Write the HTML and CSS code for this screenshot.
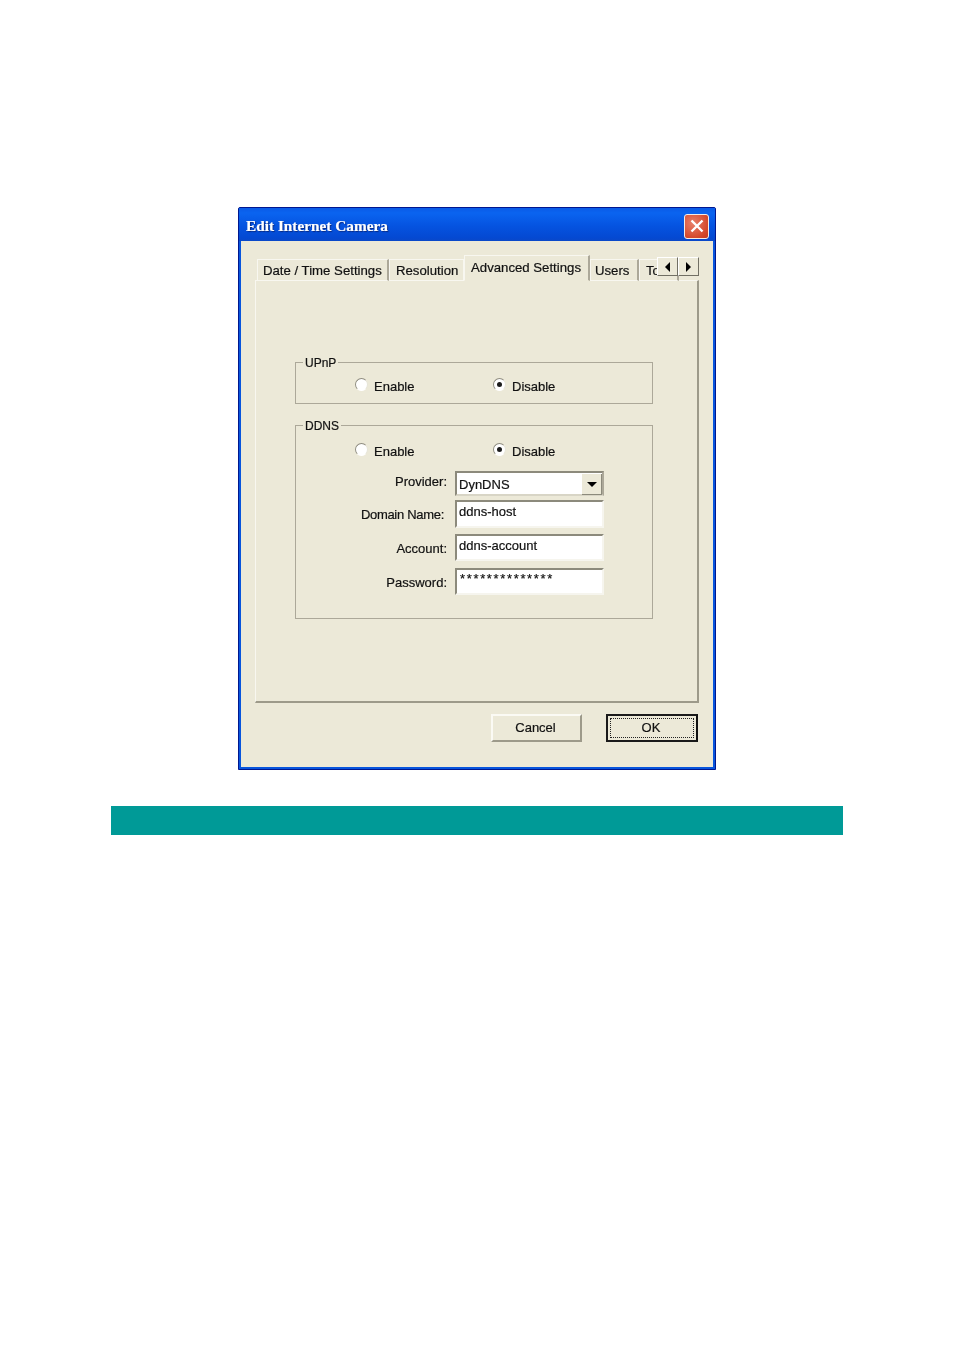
FILE: index.html
```html
<!DOCTYPE html>
<html lang="en">
<head>
  <meta charset="UTF-8" />
  <title>Edit Internet Camera</title>
  <link rel="stylesheet" href="styles.css">
</head>
<body>
  <main class="dialog">
    <header class="titlebar">
      <span class="title">Edit Internet Camera</span>
      <button class="close" aria-label="Close">
        <svg width="14" height="14" viewBox="0 0 14 14">
          <path d="M1.5 1.5 L12.5 12.5 M12.5 1.5 L1.5 12.5" stroke="#fff" stroke-width="2.4" fill="none" />
        </svg>
      </button>
    </header>

    <div class="dialog-body">
      <!-- Tabs -->
      <div class="tabs">
        <span class="tab tab-date">Date / Time Settings</span>
        <span class="tab tab-res">Resolution</span>
        <span class="tab tab-active">Advanced Settings</span>
        <span class="tab tab-users">Users</span>
        <span class="tab tab-tools">To</span>
        <div class="tab-arrows">
          <span class="arrow arrow-left"></span>
          <span class="arrow arrow-right"></span>
        </div>
      </div>

      <div class="panel">
        <!-- UPnP -->
        <fieldset class="group group-upnp">
          <legend>UPnP</legend>
          <div class="radio-row">
            <label class="radio-item"><span class="radio"></span>Enable</label>
            <label class="radio-item"><span class="radio checked"></span>Disable</label>
          </div>
        </fieldset>

        <!-- DDNS -->
        <fieldset class="group group-ddns">
          <legend>DDNS</legend>
          <div class="radio-row">
            <label class="radio-item"><span class="radio"></span>Enable</label>
            <label class="radio-item"><span class="radio checked"></span>Disable</label>
          </div>

          <div class="form-row row-provider">
            <span class="field-label">Provider:</span>
            <div class="field combo">
              <span>DynDNS</span>
              <span class="combo-btn"></span>
            </div>
          </div>
          <div class="form-row row-domain">
            <span class="field-label label-domain">Domain Name:</span>
            <div class="field">ddns-host</div>
          </div>
          <div class="form-row row-account">
            <span class="field-label">Account:</span>
            <div class="field">ddns-account</div>
          </div>
          <div class="form-row row-password">
            <span class="field-label">Password:</span>
            <div class="field field-password">**************</div>
          </div>
        </fieldset>
      </div>

      <div class="buttons">
        <button class="btn"><span class="btn-text">Cancel</span></button>
        <button class="btn btn-default"><span class="focus-ring"><span class="btn-text">OK</span></span></button>
      </div>
    </div>
  </main>

  <div class="teal-bar"></div>
</body>
</html>
```

FILE: styles.css
```css
/* Page */
body {
  margin: 0;
  padding-top: 207px;
  background: #fff;
  font-family: "Liberation Sans", Arial, sans-serif;
  font-size: 13px;
  color: #111;
  -webkit-text-stroke: 0.2px currentColor;
}

/* Window frame */
.dialog {
  box-sizing: border-box;
  width: 478px;
  height: 563px;
  margin-left: 238px;
  display: flex;
  flex-direction: column;
  border: 1px solid #00178f;
  border-radius: 2px 2px 0 0;
  background: #0855dd;
  filter: blur(0.3px);
}

.titlebar {
  height: 33px;
  flex: none;
  display: flex;
  align-items: center;
  justify-content: space-between;
  padding: 3px 6px 0 7px;
  box-sizing: border-box;
  background: linear-gradient(180deg, #0a5ae6 0%, #0a64f0 15%, #0553e0 55%, #0449d2 90%, #0a48c8 100%);
}

.title {
  font-family: "Liberation Serif", serif;
  font-weight: 700;
  font-size: 15.3px;
  color: #fff;
  text-shadow: 1px 1px 1px #0a2a80;
}

.close {
  box-sizing: border-box;
  width: 25px;
  height: 25px;
  padding: 0;
  display: flex;
  align-items: center;
  justify-content: center;
  border: 1px solid #f3ece8;
  border-radius: 3px;
  background: radial-gradient(circle at 35% 35%, #e8806a, #d4492c 70%, #c53a1c);
}

.dialog-body {
  flex: 1;
  display: flex;
  flex-direction: column;
  margin: 0 2px 2px;
  padding: 14px 14px 0;
  background: #ece9d8;
}

/* Tabs */
.tabs {
  position: relative;
  height: 26px;
  flex: none;
  display: flex;
  align-items: flex-end;
  margin-bottom: -1px;
  z-index: 1;
  overflow: hidden;
  font-size: 13.2px;
}

.tab {
  box-sizing: border-box;
  height: 22px;
  flex: none;
  padding: 3px 0 0 5px;
  background: #ece9d8;
  border-top: 1px solid #f8f7f0;
  border-left: 1px solid #f8f7f0;
  border-right: 2px solid #aca899;
  border-bottom: 1px solid #f8f7f0;
  white-space: nowrap;
}

.tab-date { width: 132px; margin-left: 2px; }
.tab-res { width: 75px; padding-left: 6px; border-right-color: #f8f7f0; border-right-width: 1px; }
.tab-active {
  width: 126px;
  height: 26px;
  padding: 4px 0 0 6px;
  border-bottom: 1px solid #ece9d8;
}
.tab-users { width: 49px; padding-left: 4px; }
.tab-tools { width: 40px; padding-left: 6px; overflow: hidden; }

.tab-arrows {
  position: absolute;
  right: 0;
  top: 2px;
  display: flex;
}

.arrow {
  box-sizing: border-box;
  width: 21px;
  height: 19px;
  display: flex;
  align-items: center;
  justify-content: center;
  background: #ece9d8;
  border-top: 1px solid #fff;
  border-left: 1px solid #fff;
  border-right: 1px solid #716f64;
  border-bottom: 1px solid #716f64;
}

.arrow::before {
  content: "";
  border-top: 5px solid transparent;
  border-bottom: 5px solid transparent;
}

.arrow-left::before { border-right: 5px solid #000; }
.arrow-right::before { border-left: 5px solid #000; }

/* Panel */
.panel {
  box-sizing: border-box;
  height: 423px;
  flex: none;
  padding: 73px 44px 0 39px;
  border-top: 1px solid #f8f7f0;
  border-left: 1px solid #f8f7f0;
  border-right: 2px solid #9d9a8a;
  border-bottom: 2px solid #9d9a8a;
}

/* Group boxes */
.group {
  box-sizing: border-box;
  margin: 0;
  padding: 0 0 0 59px;
  border: 1px solid #aca899;
}

.group legend {
  position: relative;
  top: 1px;
  margin-left: -52px;
  padding: 0 2px;
  line-height: 16px;
  font-size: 12px;
}

.group-upnp { height: 50px; margin-bottom: 13px; }
.group-ddns { height: 202px; }

.radio-row {
  display: flex;
  margin-top: 9px;
}

.group-ddns .radio-row { margin-top: 11px; }

.radio-item {
  width: 138px;
  display: flex;
  align-items: center;
  gap: 6px;
  line-height: 16px;
}

.radio {
  box-sizing: border-box;
  position: relative;
  top: -3px;
  width: 13px;
  height: 13px;
  border-radius: 50%;
  border: 1px solid;
  border-color: #8f8d80 #e6e4d8 #fff #8f8d80;
  background: #fff;
}

.radio.checked::after {
  content: "";
  position: absolute;
  left: 3px;
  top: 3px;
  width: 5px;
  height: 5px;
  border-radius: 50%;
  background: #1c1c1c;
}

/* Form rows */
.form-row {
  display: flex;
  align-items: center;
  margin-left: -59px;
}

.row-provider { margin-top: 11px; height: 25px; }
.row-domain { margin-top: 4px; height: 28px; }
.row-account { margin-top: 6px; height: 27px; }
.row-password { margin-top: 7px; height: 27px; }

.field-label {
  width: 151px;
  flex: none;
  text-align: right;
  position: relative;
}

.row-provider .field-label { top: -2px; }
.row-account .field-label,
.row-password .field-label { top: 1px; }

.field-label.label-domain {
  width: 148px;
  margin-right: 3px;
  top: 0;
  letter-spacing: -0.3px;
}

.field {
  box-sizing: border-box;
  width: 149px;
  height: 100%;
  margin-left: 8px;
  padding: 2px 0 0 2px;
  background: #fff;
  border-top: 2px solid #8c8a7c;
  border-left: 2px solid #8c8a7c;
  border-right: 2px solid #f6f5ee;
  border-bottom: 2px solid #f6f5ee;
  line-height: 16px;
}

.field-password {
  padding: 1px 0 0 3px;
  letter-spacing: 1.65px;
  white-space: nowrap;
}

.combo {
  display: flex;
  justify-content: space-between;
  padding: 4px 0 0 2px;
  border-right-color: #aca899;
  border-bottom-color: #d8d5c6;
}

.combo-btn {
  width: 19px;
  height: 20px;
  margin-top: -3px;
  display: flex;
  align-items: center;
  justify-content: center;
  background: #ece9d8;
  border-right: 1px solid #8c8a7c;
  border-bottom: 1px solid #8c8a7c;
}

.combo-btn::before {
  content: "";
  border-left: 5px solid transparent;
  border-right: 5px solid transparent;
  border-top: 5px solid #000;
}

/* Bottom buttons */
.buttons {
  display: flex;
  justify-content: flex-end;
  gap: 24px;
  margin-top: 11px;
  margin-right: 1px;
}

.btn {
  box-sizing: border-box;
  width: 91px;
  height: 28px;
  padding: 0;
  font: inherit;
  color: inherit;
  background: #ece9d8;
  border-top: 2px solid #fbfaf4;
  border-left: 2px solid #fbfaf4;
  border-right: 2px solid #9d9a8a;
  border-bottom: 2px solid #9d9a8a;
}

.btn-text {
  position: relative;
  top: -1px;
  left: -1px;
}

.btn-default {
  width: 92px;
  padding: 2px;
  border: 2px solid #1a1a1a;
  border-right-color: #111;
}

.focus-ring {
  display: flex;
  align-items: center;
  justify-content: center;
  height: 100%;
  box-sizing: border-box;
  border: 1px dotted #222;
}

/* Teal strip under the figure */
.teal-bar {
  height: 29px;
  margin: 36px 111px 0;
  background: #009a97;
}
```
